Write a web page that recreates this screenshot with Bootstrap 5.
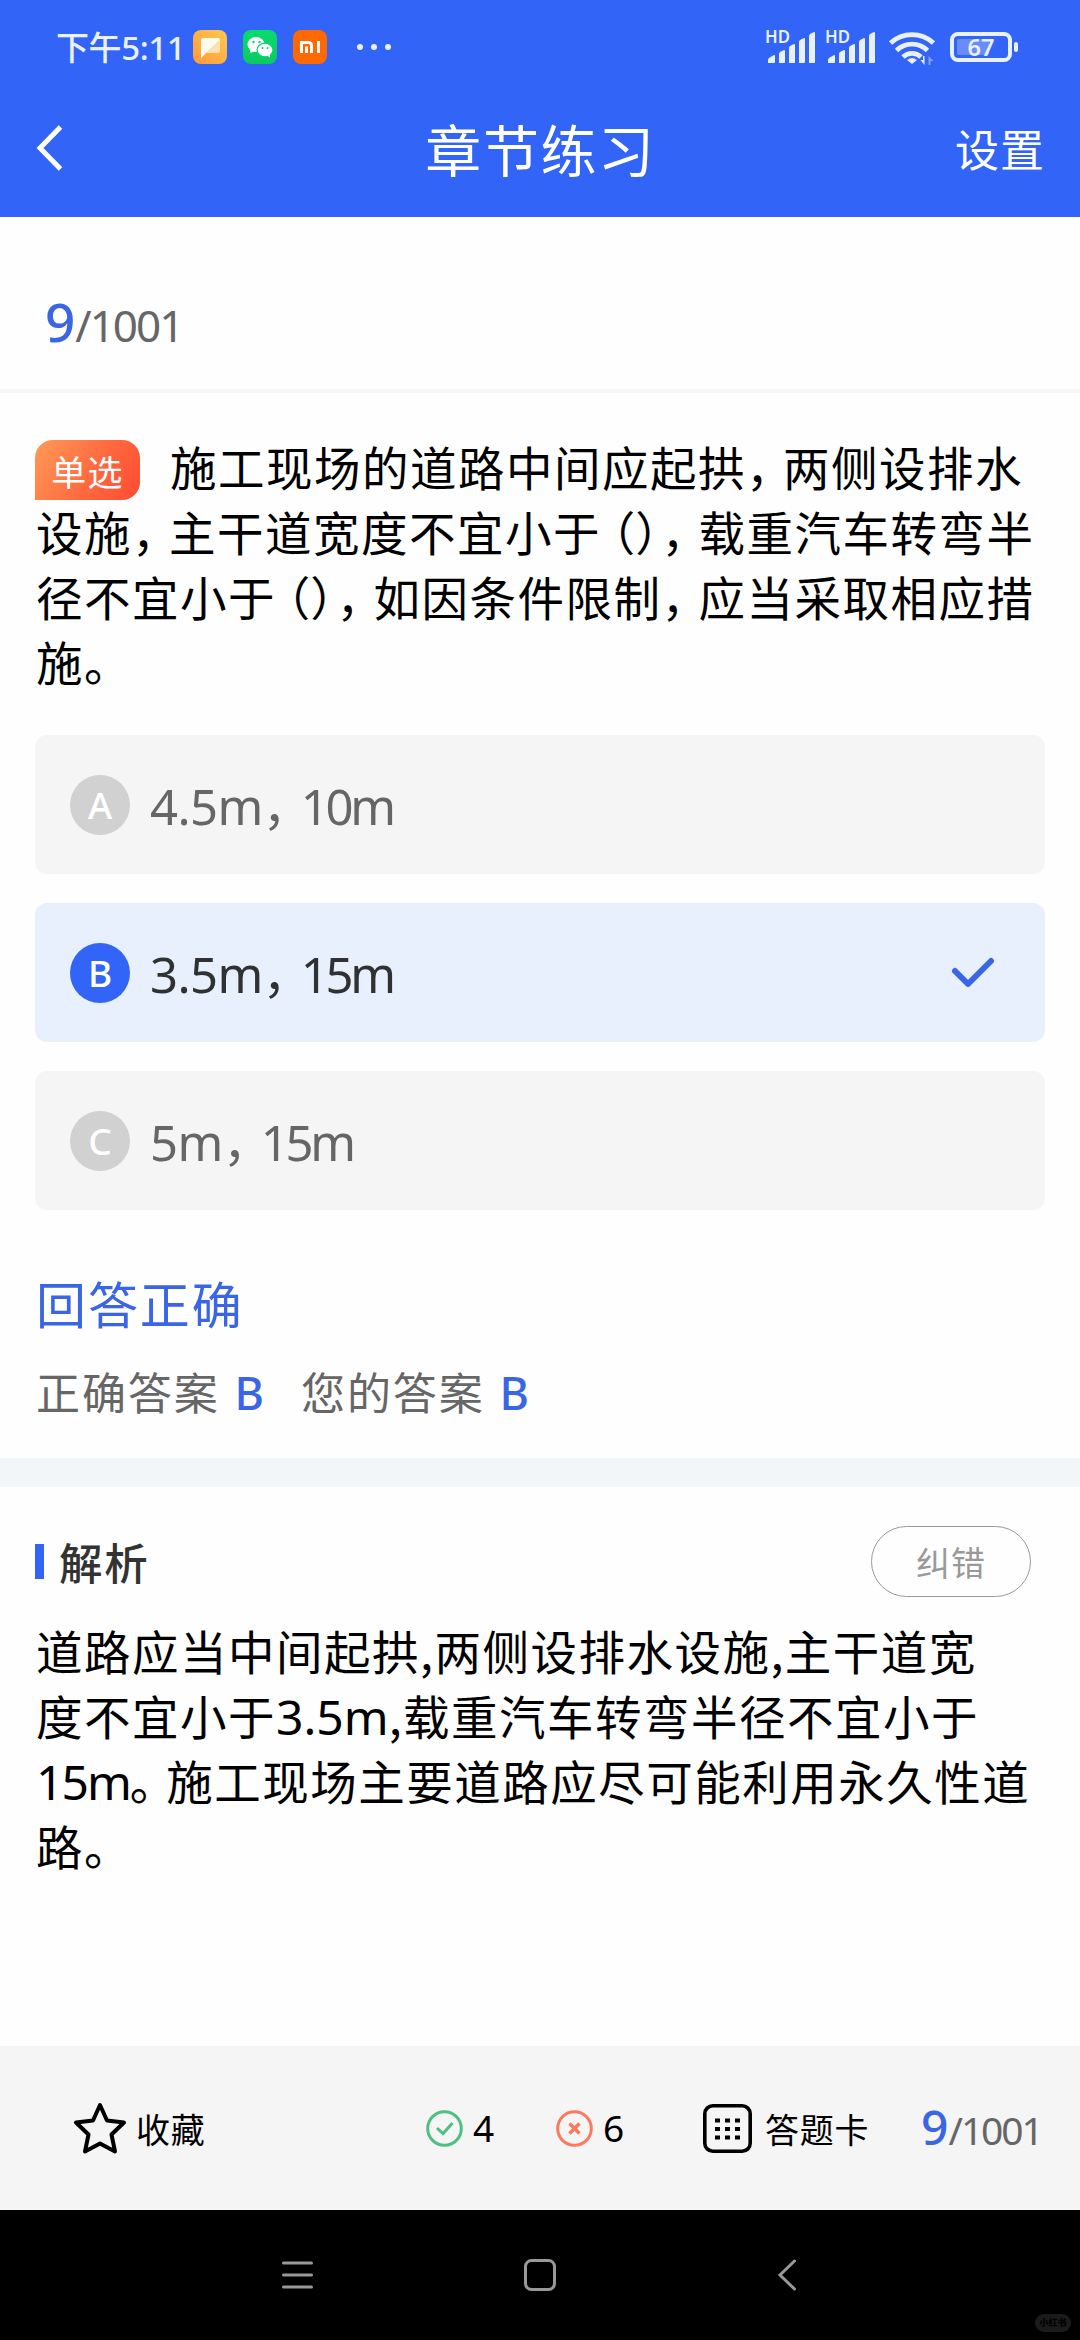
<!DOCTYPE html>
<html lang="zh-CN">
<head>
<meta charset="utf-8">
<meta name="viewport" content="width=device-width, initial-scale=1">
<title>章节练习</title>
<link href="https://cdn.jsdelivr.net/npm/bootstrap@5.3.0/dist/css/bootstrap.min.css" rel="stylesheet">
<style>
  :root { --brand: #3164f7; --ink-blue: #3a66e6; }
  body { width: 1080px; height: 2340px; overflow: hidden; background: #fefefe; color: #000;
         font-family: "Noto Sans", "Noto Sans CJK SC", sans-serif; }
  .zh { font-family: "Noto Sans CJK SC", sans-serif; }
  .latin { font-family: "Noto Sans", sans-serif; font-size: 48px; line-height: 1; letter-spacing: 0; }
  svg { display: block; flex: none; overflow: visible; }
  .app-top { height: 217px; background: var(--brand); color: #fff; }
  .status-row { height: 94px; padding: 0 62px 0 56px; color: #e9f0ff; }
  .clock { width: 137px; font-size: 33px; letter-spacing: -.4px; font-weight: 500; line-height: 50px; white-space: nowrap; }
  .title-row { height: 123px; padding: 0 35px 15px 36px; }
  .title-row > * { flex: 1 1 0; }
  .page-title { font-size: 56px; letter-spacing: 1.6px; line-height: 80px; flex: none; }
  .setting { font-size: 44px; letter-spacing: 1px; line-height: 60px; }
  .counter-row { height: 172px; padding: 0 45px 0; }
  .num-now { color: var(--ink-blue); font-weight: 500; }
  .num-all { color: #666; }
  .counter-lg { line-height: 86px; padding-top: 62px; }
  .counter-lg .num-now { font-size: 53px; }
  .counter-lg .num-all { font-size: 44px; letter-spacing: -2px; }
  .thin-rule { height: 4px; background: #f4f6f7; }
  .question-box { height: 342px; padding: 40px 0 0 36px; }
  .first-line { height: 65px; }
  .text-line { font-size: 46.5px; letter-spacing: 1.5px; line-height: 65px; height: 65px; white-space: nowrap; }
  .kind-tag { width: 105px; height: 60px; margin: 7px 30px 0 -1px; border-radius: 18px 18px 18px 0; color: #fff;
              font-size: 35px; letter-spacing: 1.2px; line-height: 62px; flex: none;
              background: linear-gradient(120deg, #ff9a56 0%, #ff6a40 55%, #ff4a32 100%); }
  .c1 { letter-spacing: -9.5px; }
  .c2 { letter-spacing: -10px; }
  .p1 { margin-left: 11px; letter-spacing: 0; font-feature-settings: "halt"; }
  .p2 { letter-spacing: 3px; }
  .option-list { padding: 0 35px; gap: 29px; }
  .option-item { height: 139px; border-radius: 12px; background: #f5f5f5; color: #666; padding: 0 51px 0 35px;
                 font-size: 49px; line-height: 60px; }
  .option-item.chosen { background: #e8effd; color: #303133; }
  .option-text { margin-left: 20px; letter-spacing: -.6px; }
  .option-text .zh { letter-spacing: -11px; }
  .tight { letter-spacing: -3.2px; }
  .latin.tight { letter-spacing: -2px; }
  .option-key { width: 60px; height: 60px; background: #d1d1d1; color: #fff; font-size: 37px; font-weight: 500; padding-top: 1px; }
  .chosen .option-key { background: var(--brand); }
  .result-box { height: 248px; padding: 57px 0 0 36px; }
  .result-head { color: var(--ink-blue); font-size: 50px; letter-spacing: 1.9px; line-height: 70px; }
  .answers { color: #666; font-size: 44px; letter-spacing: 1.9px; line-height: 60px; margin-top: 24px; }
  .answer-pair { width: 265px; white-space: nowrap; }
  .answer-key { color: var(--ink-blue); font-family: "Noto Sans", sans-serif; font-size: 45px; font-weight: 500; margin-left: 15px; line-height: 1; }
  .band { height: 29px; background: #f3f6f9; }
  .analysis-head { height: 71px; margin-top: 39px; padding: 0 49px 0 35px; }
  .marker { width: 9px; height: 35px; background: var(--brand); }
  .analysis-title { font-size: 43.5px; letter-spacing: 1.8px; font-weight: 500; color: #333; margin-left: 15px; line-height: 60px; }
  .report { width: 160px; height: 71px; border: 1px solid #999; color: #999; font-size: 34px; letter-spacing: 1px; border-radius: 36px; }
  .analysis-body { height: 449px; padding: 20px 0 0 36px; }
  .bottom-bar { height: 164px; background: #f5f5f5; padding: 0 0 0 73px; font-size: 34px; }
  .bottom-bar .zh { letter-spacing: .7px; margin-left: 9px; }
  .tally { font-size: 37px; margin-left: 10px; }
  .slot-a, .slot-b, .slot-c, .slot-d { flex: none; }
  .slot-a { width: 353px; } .slot-b { width: 130px; } .slot-c { width: 147px; } .slot-d { width: 219px; }
  .slot-d .zh { margin-left: 13px !important; }
  .counter-sm { white-space: nowrap; line-height: 60px; padding-top: 2px; margin-left: -1px; }
  .counter-sm .num-now { font-size: 48px; }
  .counter-sm .num-all { font-size: 39px; letter-spacing: -2.1px; }
  .sys-nav { height: 130px; background: #000; position: relative; padding: 49px 0 0 282px; }
  .nav-home { margin: 0 222px 0 211px; }
  .stamp { position: absolute; right: 9px; bottom: 8px; width: 36px; height: 18px; border-radius: 9px; background: #1b1b1b; color: #000;
           font-size: 9px; line-height: 18px; font-weight: 900; text-align: center; }
</style>
<script src="https://cdn.jsdelivr.net/npm/bootstrap@5.3.0/dist/js/bootstrap.bundle.min.js"></script>
</head>
<body class="d-flex flex-column">

<header class="app-top">
  <div class="status-row d-flex align-items-center justify-content-between">
    <div class="d-flex align-items-center">
      <div class="clock"><span class="zh">下午</span>5:11</div>
      <svg width="200" height="34" viewBox="193 30 200 34">
        <defs>
          <linearGradient id="gA" x1="0" y1="1" x2="1" y2="0"><stop offset="0" stop-color="#ff9a3c"/><stop offset="1" stop-color="#ffc94e"/></linearGradient>
          <linearGradient id="gB" x1="0" y1="0" x2="0" y2="1"><stop offset="0" stop-color="#06dc6c"/><stop offset="1" stop-color="#0cc963"/></linearGradient>
        </defs>
        <rect x="193" y="30" width="34" height="34" rx="8" fill="url(#gA)"/>
        <path d="M201 40q0-2 2-2h15q2 0 2 2l-14 13-5 5z" fill="#fffaf0"/>
        <path d="M220 40v11q0 2-2 2h-12z" fill="#ffe0b0"/>
        <rect x="243" y="30" width="34" height="34" rx="8" fill="url(#gB)"/>
        <ellipse cx="256" cy="44.500" rx="8.500" ry="7.500" fill="#fff"/><path d="M250 48l0.500 5 5-2z" fill="#fff"/>
        <ellipse cx="265" cy="50" rx="8" ry="6.800" fill="#fff" stroke="#08d468" stroke-width="1.200"/><path d="M266 55l4 2.500v-5z" fill="#fff"/>
        <g fill="#08d468"><circle cx="253.500" cy="42" r="1.200"/><circle cx="259.500" cy="42" r="1.200"/><circle cx="262.500" cy="48" r="1"/><circle cx="267.500" cy="48" r="1"/></g>
        <rect x="293" y="30" width="34" height="34" rx="8" fill="#ff6900"/>
        <path d="M301.500 53V42.500h7q3 0 3 3V53M306.500 53v-6.500M318.500 41v12" fill="none" stroke="#fff" stroke-width="3"/>
        <g fill="#e9f0ff"><circle cx="360" cy="47" r="3"/><circle cx="374" cy="47" r="3"/><circle cx="388" cy="47" r="3"/></g>
      </svg>
    </div>
    <svg width="254" height="36" viewBox="763 29 254 36" fill="#e9f0ff">
      <g id="sig">
        <text x="764" y="43" font-family="Noto Sans" font-size="17" font-weight="600" textLength="25" lengthAdjust="spacingAndGlyphs">HD</text>
        <path d="M767 63v-3q0-1 1-2l5-3q1 0 1 1v6q0 1-1 1z"/>
        <path d="M778 63V54q0-1 1-2l4-2q1 0 1 1v11q0 1-1 1z"/>
        <path d="M788 63V48q0-1 1-2l4-2q1 0 1 1v17q0 1-1 1z"/>
        <path d="M798 63V42q0-1 1-2l4-2q1 0 1 1v23q0 1-1 1z"/>
        <path d="M808 63V36q0-1 1-2l4-2q1 0 1 1v29q0 1-1 1z"/>
      </g>
      <use href="#sig" x="60"/>
      <g fill="none" stroke="#e9f0ff" stroke-width="4.800">
        <path d="M889.500 43a32 32 0 0 1 43 0"/><path d="M895.500 50.500a22 22 0 0 1 31 0"/><path d="M902 57a13 13 0 0 1 18 0"/>
      </g>
      <path d="M911 64l-5-4q5-4 10 0z"/>
      <path d="M923.500 56v9l-4-5h2.500v-4z"/><path d="M927.500 65v-9l5 5h-3v4z" opacity=".45"/>
      <rect x="951" y="34" width="58" height="26" rx="6" fill="none" stroke="#e9f0ff" stroke-width="4"/>
      <rect x="956" y="39" width="32" height="16" rx="2" opacity=".3"/>
      <rect x="1013" y="42" width="4" height="10" rx="2"/>
      <text x="980" y="56" font-family="Noto Sans" font-size="23.500" font-weight="600" text-anchor="middle">67</text>
    </svg>
  </div>
  <div class="title-row d-flex align-items-center">
    <div><svg width="27" height="46" viewBox="0 0 27 46" fill="none" stroke="#fff" stroke-width="5"><path d="M24.500 2L4 23l20.500 21"/></svg></div>
    <h1 class="page-title zh fw-normal m-0">章节练习</h1>
    <div class="setting zh text-end">设置</div>
  </div>
</header>

<section class="counter-row">
  <div class="counter-lg"><span class="num-now">9</span><span class="num-all">/1001</span></div>
</section>
<div class="thin-rule"></div>

<section class="question-box zh">
  <div class="first-line d-flex align-items-start"><div class="kind-tag text-center">单选</div><div class="text-line">施工现场的道路中间应起拱<span class="c1">，</span>两侧设排水</div></div>
  <div class="text-line">设施<span class="c1">，</span>主干道宽度不宜小于<span class="p1">（</span><span class="p2">）</span><span class="c1">，</span>载重汽车转弯半</div>
  <div class="text-line">径不宜小于<span class="p1">（</span><span class="p2">）</span><span class="c1">，</span>如因条件限制<span class="c1">，</span>应当采取相应措</div>
  <div class="text-line">施。</div>
</section>

<section class="option-list d-flex flex-column">
  <div class="option-item d-flex align-items-center">
    <span class="option-key rounded-circle d-flex align-items-center justify-content-center">A</span>
    <span class="option-text">4.5m<span class="zh">，</span><span class="tight">10m</span></span>
  </div>
  <div class="option-item chosen d-flex align-items-center">
    <span class="option-key rounded-circle d-flex align-items-center justify-content-center">B</span>
    <span class="option-text">3.5m<span class="zh">，</span><span class="tight">15m</span></span>
    <svg class="ms-auto" width="42" height="30" viewBox="0 0 42 30" fill="none" stroke="#3a66e6" stroke-width="6" stroke-linecap="round" stroke-linejoin="round"><path d="M3 13l13 13L39 3"/></svg>
  </div>
  <div class="option-item d-flex align-items-center">
    <span class="option-key rounded-circle d-flex align-items-center justify-content-center">C</span>
    <span class="option-text">5m<span class="zh">，</span><span class="tight">15m</span></span>
  </div>
</section>

<section class="result-box">
  <div class="result-head zh">回答正确</div>
  <div class="answers zh d-flex">
    <div class="answer-pair">正确答案<span class="answer-key">B</span></div>
    <div class="answer-pair">您的答案<span class="answer-key">B</span></div>
  </div>
</section>
<div class="band"></div>

<section>
  <div class="analysis-head d-flex align-items-center">
    <span class="marker"></span>
    <h2 class="analysis-title zh mb-0">解析</h2>
    <button class="report zh btn ms-auto p-0">纠错</button>
  </div>
  <div class="analysis-body zh">
    <div class="text-line">道路应当中间起拱,两侧设排水设施,主干道宽</div>
    <div class="text-line">度不宜小于<span class="latin">3.5m</span>,载重汽车转弯半径不宜小于</div>
    <div class="text-line"><span class="latin tight">15m</span><span class="c2">。</span>施工现场主要道路应尽可能利用永久性道</div>
    <div class="text-line">路。</div>
  </div>
</section>

<footer class="bottom-bar d-flex align-items-center">
  <div class="slot-a d-flex align-items-center">
    <svg width="54" height="52" viewBox="0 0 54 52" fill="none" stroke="#000" stroke-width="4" stroke-linejoin="round"><path d="M27 3l7 15.500 17 2-12.500 12L42 49.500 27 41.500 12 49.500l3.500-17L3 20.500l17-2z"/></svg>
    <span class="zh">收藏</span>
  </div>
  <div class="slot-b d-flex align-items-center">
    <svg width="37" height="37" viewBox="0 0 37 37" fill="none" stroke="#4fbf82" stroke-width="3"><circle cx="18.500" cy="18.500" r="16.800"/><path d="M11 18l6 5.500L26.500 13"/></svg>
    <span class="tally">4</span>
  </div>
  <div class="slot-c d-flex align-items-center">
    <svg width="37" height="37" viewBox="0 0 37 37" fill="none" stroke="#fa7a60" stroke-width="3"><circle cx="18.500" cy="18.500" r="16.800"/><path d="M13.500 13.500l10 10M23.500 13.500l-10 10" stroke-width="3.500"/></svg>
    <span class="tally">6</span>
  </div>
  <div class="slot-d d-flex align-items-center">
    <svg width="49" height="49" viewBox="0 0 49 49"><rect x="1.800" y="1.800" width="45.400" height="45.400" rx="8" fill="none" stroke="#000" stroke-width="3.600"/>
      <path d="M12 16.500h25M12 25h25M12 33.500h25" stroke="#000" stroke-width="4" stroke-dasharray="5 5"/></svg>
    <span class="zh">答题卡</span>
  </div>
  <div class="counter-sm"><span class="num-now">9</span><span class="num-all">/1001</span></div>
</footer>

<nav class="sys-nav d-flex align-items-start">
  <svg width="31" height="32" viewBox="0 0 31 32" stroke="#999" stroke-width="3" stroke-linecap="round"><path d="M1.500 4h28M1.500 16h28M1.500 28h28"/></svg>
  <svg class="nav-home" width="32" height="32" viewBox="0 0 32 32" fill="none" stroke="#999" stroke-width="3"><rect x="1.500" y="1.500" width="29" height="29" rx="6"/></svg>
  <svg width="18" height="32" viewBox="0 0 18 32" fill="none" stroke="#999" stroke-width="3" stroke-linecap="round"><path d="M16.500 2L2 16l14.500 14"/></svg>
  <span class="stamp zh">小红书</span>
</nav>
</body>
</html>
